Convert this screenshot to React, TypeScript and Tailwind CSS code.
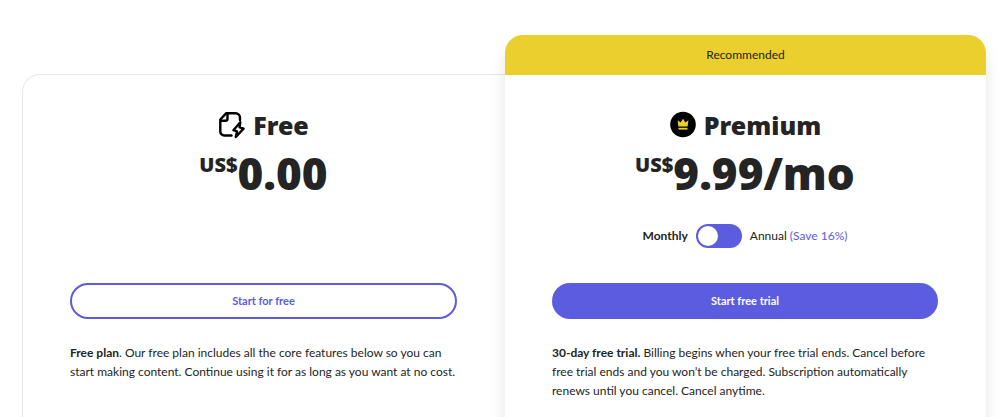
import { useState } from 'react'
import type { ReactNode } from 'react'

function FreeIcon() {
  return (
    <svg aria-hidden="true" className="size-7 shrink-0" fill="none" stroke="#000" strokeLinecap="round" strokeLinejoin="round" strokeWidth="2.4" viewBox="0 0 28 28">
      <path d="M13.5 24.5H6.5A4 4 0 0 1 2.3 20.5V8.5L8.3 2.2H17.5A4.5 4.5 0 0 1 22 6.7V9" />
      <path d="M2.8 9.8H7.5A2 2 0 0 0 9.5 7.8V2.8" />
      <path d="M22.3 11.2L15.4 19.2L19 20.4L17.8 26L25.6 17.6L21.6 16.4Z" />
    </svg>
  )
}

function PremiumIcon() {
  return (
    <svg aria-hidden="true" className="size-7 shrink-0" viewBox="0 0 28 28">
      <circle cx="14" cy="13.5" fill="#000" r="12.8" />
      <path d="M8.6 9.2L11.6 11.6L14 7.8L16.4 11.6L19.4 9.2L18.6 15.6H9.4Z" fill="#ebcf2d" />
      <path d="M9.5 16.8H18.5V18.6H9.5Z" fill="#ebcf2d" />
    </svg>
  )
}

interface PlanHeadingProps {
  icon: ReactNode
  name: string
  price: string
}

function PlanHeading({ icon, name, price }: PlanHeadingProps) {
  return (
    <div className="text-center font-['Noto_Sans','Open_Sans',sans-serif] font-black">
      <h2 className="flex h-7 items-center justify-center gap-[7px] text-[25px] leading-7">
        {icon}
        {name}
      </h2>
      <p className="mt-1 flex h-15 items-start justify-center">
        <span className="pt-2 text-xl leading-7">US$</span>
        <span className="text-[44px] leading-15">{price}</span>
      </p>
    </div>
  )
}

export default function App() {
  const [annual, setAnnual] = useState(false)

  return (
    <main className="h-screen overflow-hidden bg-white pt-[35px] pr-[14px] pl-[22px] font-['Lato','Noto_Sans',sans-serif] text-[#242424]">
      <div className="grid grid-cols-[483fr_481fr]">
        <section className="mt-[39px] rounded-tl-[18px] border-t border-l border-[#e6e6e6] pt-9 pr-12 pb-12 pl-[47px]">
          <PlanHeading icon={<FreeIcon />} name="Free" price="0.00" />
          <div className="mt-[21px] h-6" />
          <button className="mt-[35px] h-9 w-full rounded-full border-2 border-[#5c5ce0] text-[11px] font-bold text-[#5c5ce0]" type="button">
            Start for free
          </button>
          <p className="mt-6 text-xs leading-[19px]">
            <strong>Free plan</strong>. Our free plan includes all the core features below so you can start making content. Continue using it for as long as you want at no cost.
          </p>
        </section>

        <section className="rounded-t-[18px] bg-white shadow-[0_12px_16px_rgba(0,0,0,0.1)]">
          <p className="h-10 rounded-t-[18px] bg-[#ebcf2d] text-center text-xs leading-10">Recommended</p>
          <div className="pt-9 pr-12 pb-12 pl-[47px]">
            <PlanHeading icon={<PremiumIcon />} name="Premium" price="9.99/mo" />
            <label className="mt-[21px] flex h-6 items-center justify-center gap-2 text-xs">
              <span className="font-bold">Monthly</span>
              <input
                checked={annual}
                className="h-6 w-[46px] appearance-none rounded-full bg-[#5c5ce0] p-[2px] before:block before:size-5 before:rounded-full before:bg-white checked:before:ml-auto"
                onChange={(event) => setAnnual(event.target.checked)}
                role="switch"
                type="checkbox"
              />
              <span>
                Annual <span className="text-[#5c5ce0]">(Save 16%)</span>
              </span>
            </label>
            <button className="mt-[35px] h-9 w-full rounded-full bg-[#5c5ce0] text-[11px] font-bold text-white" type="button">
              Start free trial
            </button>
            <p className="mt-6 text-xs leading-[19px]">
              <strong>30-day free trial.</strong> Billing begins when your free trial ends. Cancel before free trial ends and you won’t be charged. Subscription automatically renews until you cancel. Cancel anytime.
            </p>
          </div>
        </section>
      </div>
    </main>
  )
}
